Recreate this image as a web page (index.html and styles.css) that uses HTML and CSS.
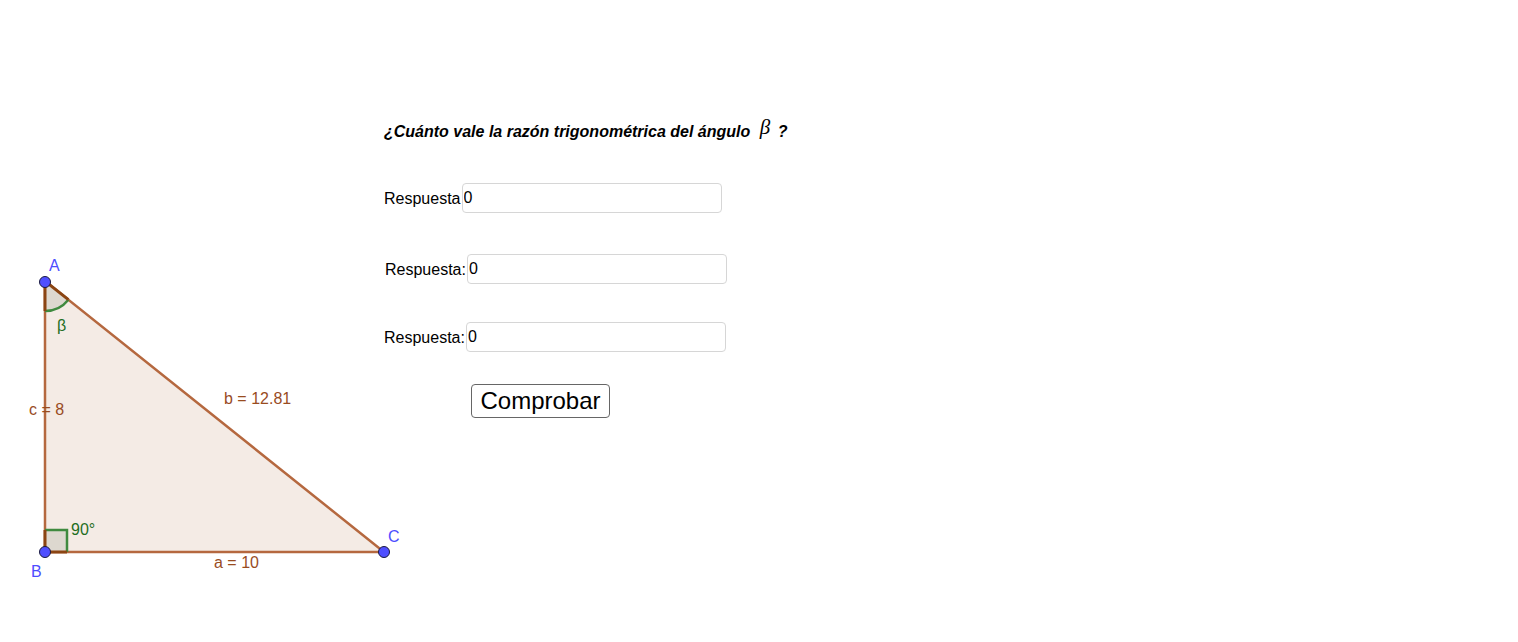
FILE: index.html
```
<!DOCTYPE html>
<html lang="es">
<head>
    <meta charset="UTF-8">
    <title>Razón trigonométrica</title>
    <link rel="stylesheet" href="styles.css">
</head>
<body>
    <div class="applet">
        <svg class="figure" width="384" height="642" viewBox="0 0 384 642">
            <!-- triangulo -->
            <polygon points="45,281 45,552 384,552" fill="#f4ebe5" stroke="#b5683f" stroke-width="2.5"/>
            <!-- angulo beta -->
            <path d="M45,281 L45,311 A30,30 0 0 0 68.4,299.7 Z" fill="#ddd8cf"/>
            <path d="M45,311 A30,30 0 0 0 68.4,299.7" fill="none" stroke="#3f8a3f" stroke-width="2.5"/>
            <path d="M45,311 L45,281 L68.4,299.7" fill="none" stroke="#8b4513" stroke-width="3"/>
            <!-- angulo recto -->
            <rect x="45" y="530" width="22" height="22" fill="#ddd8cf"/>
            <path d="M45,530 L67,530 L67,552" fill="none" stroke="#3f8a3f" stroke-width="2.5"/>
            <path d="M45,530 L45,552 L67,552" fill="none" stroke="#8b4513" stroke-width="3"/>
            <!-- puntos -->
            <circle cx="45" cy="282" r="5.5" class="pt"/>
            <circle cx="45" cy="552" r="5.5" class="pt"/>
            <circle cx="384" cy="552" r="5.5" class="pt"/>
            <!-- rotulos -->
            <text x="49" y="271" class="lbl-pt">A</text>
            <text x="31" y="577" class="lbl-pt">B</text>
            <text x="388" y="542" class="lbl-pt">C</text>
            <text x="57" y="331" class="lbl-ang">β</text>
            <text x="71" y="535" class="lbl-ang">90°</text>
            <text x="29" y="415" class="lbl-seg">c = 8</text>
            <text x="224" y="404" class="lbl-seg">b = 12.81</text>
            <text x="214" y="568" class="lbl-seg">a = 10</text>
        </svg>
        <div class="panel">
            <p class="question">¿Cuánto vale la razón trigonométrica del ángulo <span class="beta">β</span> ?</p>
            <div class="row row-1">
                <label>Respuesta</label>
                <input type="text" value="0">
            </div>
            <div class="row row-2">
                <label>Respuesta:</label>
                <input type="text" value="0">
            </div>
            <div class="row row-3">
                <label>Respuesta:</label>
                <input type="text" value="0">
            </div>
            <button class="check">Comprobar</button>
        </div>
    </div>
</body>
</html>
```

FILE: styles.css
```
* {
    margin: 0px;
    padding: 0px;
    box-sizing: border-box;
}
body {
    background: white;
    font-family: "Liberation Sans", Arial, sans-serif;
    color: black;
}
.applet {
    display: flex;
    width: 1518px;
    height: 642px;
    overflow: hidden;
}
.figure {
    flex: none;
    overflow: visible;
}
.figure text {
    font-family: "Liberation Sans", Arial, sans-serif;
    font-size: 16px;
}
.figure .pt {
    fill: #4f4fff;
    stroke: #1a1a40;
    stroke-width: 1;
}
.figure .lbl-pt {
    fill: #4d4dff;
}
.figure .lbl-ang {
    fill: #1f6e1f;
}
.figure .lbl-seg {
    fill: #994c1f;
}
.panel {
    display: flex;
    flex-direction: column;
    align-items: flex-start;
    padding-top: 119px;
}
.question {
    font-size: 16px;
    font-weight: bold;
    font-style: italic;
    height: 22px;
    line-height: 22px;
}
.question .beta {
    font-family: "Liberation Serif", "Times New Roman", serif;
    font-weight: normal;
    font-size: 21px;
    position: relative;
    top: -3px;
    margin: 0 3px 0 5px;
}
.row {
    display: flex;
    align-items: center;
    font-size: 16px;
}
.row label {
    margin-right: 1px;
    padding-top: 1px;
}
.row input {
    width: 260px;
    height: 30px;
    border: 1px solid #d6d6d6;
    border-radius: 4px;
    padding: 0 2px 0 1px;
    font-family: "Liberation Sans", Arial, sans-serif;
    font-size: 16px;
    outline: none;
}
.row-1 {
    margin-top: 42px;
}
.row-2 {
    margin-top: 41px;
    margin-left: 1px;
}
.row-3 {
    margin-top: 38px;
}
.check {
    margin-top: 32px;
    margin-left: 87px;
    width: 139px;
    height: 34px;
    background: white;
    border: 1px solid #666666;
    border-radius: 4px;
    font-family: "Liberation Sans", Arial, sans-serif;
    font-size: 24px;
    color: black;
}
```
